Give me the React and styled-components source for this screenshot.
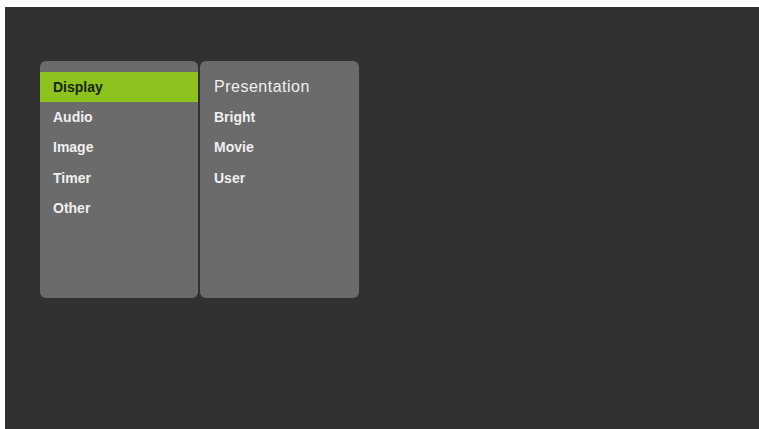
import styled, { createGlobalStyle } from "styled-components";

const GlobalStyle = createGlobalStyle`
  html, body {
    margin: 0;
    padding: 0;
    background: #ffffff;
  }
`;

const mainMenu = ["Display", "Audio", "Image", "Timer", "Other"];
const subMenu = ["Presentation", "Bright", "Movie", "User"];

export default function App() {
  return (
    <>
      <GlobalStyle />
      <Screen>
        <Panels>
          <Panel>
            {mainMenu.map((item, i) => (
              <MenuItem key={item} $active={i === 0}>
                {item}
              </MenuItem>
            ))}
          </Panel>
          <Panel>
            {subMenu.map((item, i) => (
              <SubItem key={item} $current={i === 0}>
                {item}
              </SubItem>
            ))}
          </Panel>
        </Panels>
      </Screen>
    </>
  );
}

const Screen = styled.div`
  margin: 7px 0 0 5px;
  width: 754px;
  height: 422px;
  background: #313131;
  padding: 54px 0 0 35px;
  box-sizing: border-box;
  font-family: "Liberation Sans", Arial, sans-serif;
`;

const Panels = styled.div`
  display: flex;
  gap: 2px;
`;

const Panel = styled.div`
  width: 158px;
  height: 237px;
  background: #6b6b6b;
  border-radius: 6px;
  padding-top: 11px;
  box-sizing: border-box;
  display: flex;
  flex-direction: column;
  overflow: hidden;

  & + & {
    width: 159px;
  }
`;

const MenuItem = styled.div`
  flex: 0 0 auto;
  height: ${(p) => (p.$active ? "29.5px" : "30.5px")};
  display: flex;
  align-items: center;
  padding-left: 13px;
  font-size: 14px;
  font-weight: 700;
  color: ${(p) => (p.$active ? "#17260a" : "#f0f0f0")};
  background: ${(p) => (p.$active ? "#8dc21f" : "transparent")};
`;

const SubItem = styled.div`
  flex: 0 0 auto;
  height: ${(p) => (p.$current ? "29.5px" : "30.5px")};
  display: flex;
  align-items: center;
  padding-left: 14px;
  font-size: ${(p) => (p.$current ? "16px" : "14px")};
  font-weight: ${(p) => (p.$current ? 400 : 700)};
  letter-spacing: ${(p) => (p.$current ? "0.5px" : "0")};
  color: #f0f0f0;
`;
